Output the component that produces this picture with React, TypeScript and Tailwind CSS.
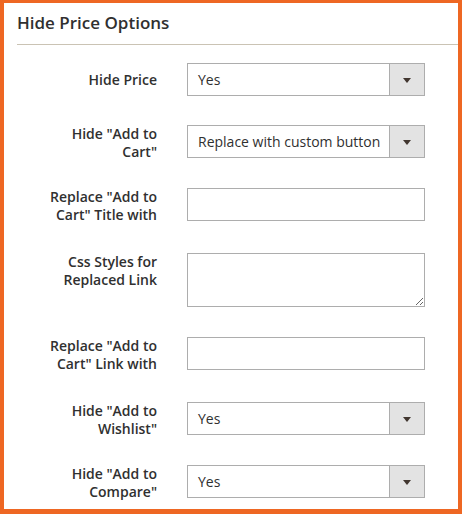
import type { ReactNode } from "react";

type Row = {
  label: ReactNode;
  twoLines?: boolean;
  control: "select" | "input" | "textarea";
  value?: string;
  space: string;
};

const rows: Row[] = [
  { label: "Hide Price", control: "select", value: "Yes", space: "pb-[29px]" },
  {
    label: (
      <>
        Hide "Add to
        <br />
        Cart"
      </>
    ),
    twoLines: true,
    control: "select",
    value: "Replace with custom button",
    space: "pb-[30px]",
  },
  {
    label: (
      <>
        Replace "Add to
        <br />
        Cart" Title with
      </>
    ),
    twoLines: true,
    control: "input",
    space: "pb-[32px]",
  },
  {
    label: (
      <>
        Css Styles for
        <br />
        Replaced Link
      </>
    ),
    twoLines: true,
    control: "textarea",
    space: "pb-[30px]",
  },
  {
    label: (
      <>
        Replace "Add to
        <br />
        Cart" Link with
      </>
    ),
    twoLines: true,
    control: "input",
    space: "pb-[32px]",
  },
  {
    label: (
      <>
        Hide "Add to
        <br />
        Wishlist"
      </>
    ),
    twoLines: true,
    control: "select",
    value: "Yes",
    space: "pb-[30px]",
  },
  {
    label: (
      <>
        Hide "Add to
        <br />
        Compare"
      </>
    ),
    twoLines: true,
    control: "select",
    value: "Yes",
    space: "pb-0",
  },
];

function FakeSelect({ value }: { value: string }) {
  return (
    <div className="flex h-[33px] w-[238px] border border-[#adadad] bg-white">
      <div className="flex flex-1 items-center overflow-hidden whitespace-nowrap pl-[10px] text-[14px] text-[#303030]">
        {value}
      </div>
      <div className="flex w-[35px] items-center justify-center border-l border-[#adadad] bg-[#e3e3e3]">
        <svg width="8" height="5" viewBox="0 0 8 5" className="mt-[1px]">
          <path d="M0 0h8L4 5z" fill="#41362f" />
        </svg>
      </div>
    </div>
  );
}

function Control({ row }: { row: Row }) {
  if (row.control === "select") return <FakeSelect value={row.value ?? ""} />;
  if (row.control === "textarea")
    return (
      <textarea
        className="block h-[54px] w-[238px] border border-[#adadad] bg-white outline-none"
        readOnly
      />
    );
  return (
    <input
      className="block h-[33px] w-[238px] border border-[#adadad] bg-white outline-none"
      readOnly
    />
  );
}

export default function App() {
  return (
    <div
      className="h-[514px] w-[462px] overflow-hidden border-t-[3px] border-r-[4px] border-b-[5px] border-l-[4px] border-[#ee6723] bg-white text-[#303030]"
      style={{ fontFamily: '"Open Sans", "Liberation Sans", sans-serif' }}
    >
      <div className="pl-[13px] pt-[8px]">
        <h2 className="text-[17px] leading-[23px] font-semibold text-[#303030]">Hide Price Options</h2>
        <div className="mt-[10px] h-px bg-[#cac3b4]" />
      </div>
      <div className="pl-[13px] pt-[18px]">
        {rows.map((row, i) => (
          <div key={i} className="flex items-start">
            <div
              className={`w-[140px] text-right text-[14px] leading-[18px] font-semibold whitespace-nowrap ${
                row.twoLines ? "pt-0" : "pt-[8px]"
              }`}
            >
              {row.label}
            </div>
            <div className={`ml-[30px] ${row.space}`}>
              <Control row={row} />
            </div>
          </div>
        ))}
      </div>
    </div>
  );
}
